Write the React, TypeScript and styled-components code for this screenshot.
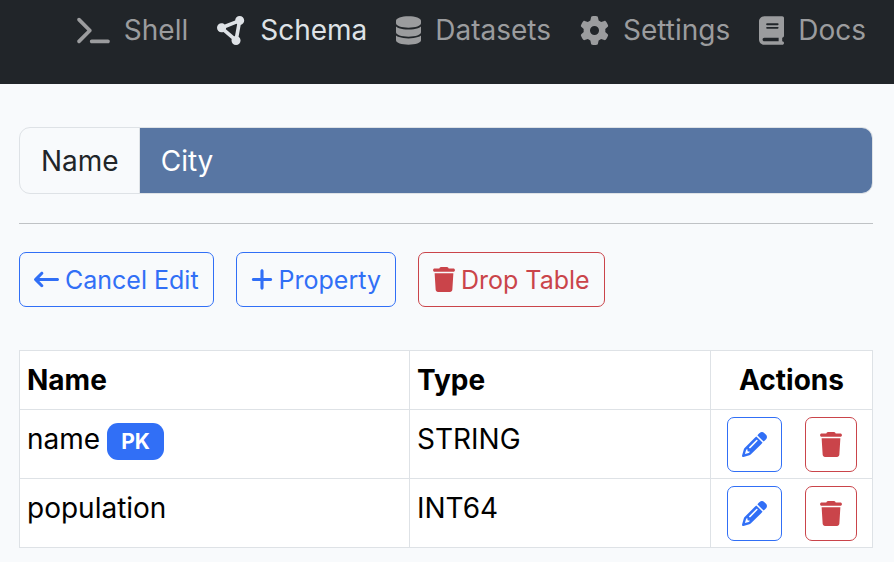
import React from "react";
import styled, { createGlobalStyle } from "styled-components";
import {
  FaArrowLeftLong,
  FaBook,
  FaCircleNodes,
  FaDatabase,
  FaGear,
  FaPencil,
  FaPlus,
  FaTerminal,
  FaTrash,
} from "react-icons/fa6";

const GlobalStyle = createGlobalStyle`
  *, *::before, *::after { box-sizing: border-box; }
  body {
    margin: 0;
    background: #f8fafc;
    color: #212529;
    font-family: Inter, "Liberation Sans", sans-serif;
    font-size: 28px;
    line-height: 42px;
  }
`;

const Icon = styled.span<{ $width: number; $height: number }>`
  flex: none;
  width: ${(p) => p.$width}px;
  height: ${(p) => p.$height}px;

  svg {
    display: block;
    width: 100%;
    height: 100%;
  }
`;

const Header = styled.header`
  display: flex;
  justify-content: flex-end;
  padding: 9px 28px 33px;
  background: #212529;
`;

const NavList = styled.nav`
  display: flex;
  gap: 29px;
`;

const NavLink = styled.a<{ $active?: boolean }>`
  display: flex;
  align-items: center;
  gap: 14px;
  color: ${(p) => (p.$active ? "#dee2e6" : "#9b9c9e")};
  text-decoration: none;
  white-space: nowrap;
`;

const Main = styled.main`
  padding: 43px 21px 14px 19px;
`;

const InputGroup = styled.div`
  display: flex;
  height: 67px;
  border: 1px solid #dee2e6;
  border-radius: 11px;
  overflow: hidden;
`;

const InputLabel = styled.label`
  display: flex;
  align-items: center;
  padding: 0 20px 0 21px;
  border-right: 1px solid #dee2e6;
`;

const NameInput = styled.input`
  flex: 1;
  min-width: 0;
  border: 0;
  padding: 0 21px;
  background: #5876a3;
  color: #fff;
  font: inherit;
  outline: none;
`;

const Divider = styled.hr`
  height: 1px;
  margin: 29px 0 28px;
  border: 0;
  background: #bfc2c5;
`;

const Toolbar = styled.div`
  display: flex;
  gap: 22px;
  margin-bottom: 43px;
`;

const tones = { primary: "#316ff6", danger: "#ca444a" };

const Button = styled.button<{ $tone: keyof typeof tones }>`
  display: inline-flex;
  align-items: center;
  gap: 6px;
  height: 55px;
  padding: 0 14px;
  border: 1px solid ${(p) => tones[p.$tone]};
  border-radius: 7px;
  background: transparent;
  color: ${(p) => tones[p.$tone]};
  font: inherit;
  font-size: 25px;
  white-space: nowrap;
  cursor: pointer;
`;

const Table = styled.table`
  width: 100%;
  table-layout: fixed;
  border-collapse: collapse;
  background: #fff;
  color: #000;
`;

const Column = styled.col<{ $width: string }>`
  width: ${(p) => p.$width};
`;

const HeadCell = styled.th<{ $center?: boolean }>`
  height: 59px;
  padding: 0 7px;
  border: 1px solid #dee2e6;
  font-weight: 700;
  text-align: ${(p) => (p.$center ? "center" : "left")};
`;

const Cell = styled.td`
  height: 69px;
  padding: 7px 7px 0;
  border: 1px solid #dee2e6;
  line-height: 44px;
  vertical-align: top;
`;

const CellText = styled.div`
  display: flex;
  align-items: flex-start;
  gap: 7px;
`;

const Badge = styled.span`
  margin-top: 6px;
  padding: 0 14px;
  border-radius: 11px;
  background: #316ff6;
  color: #fff;
  font-size: 21px;
  font-weight: 700;
  line-height: 37px;
`;

const Actions = styled.div`
  display: flex;
  justify-content: center;
  gap: 23px;
`;

const navItems = [
  { label: "Shell", icon: <FaTerminal />, width: 33 },
  { label: "Schema", icon: <FaCircleNodes />, width: 29, active: true },
  { label: "Datasets", icon: <FaDatabase />, width: 25 },
  { label: "Settings", icon: <FaGear />, width: 29 },
  { label: "Docs", icon: <FaBook />, width: 25 },
];

const properties = [
  { name: "name", type: "STRING", primaryKey: true },
  { name: "population", type: "INT64", primaryKey: false },
];

export default function App() {
  return (
    <>
      <GlobalStyle />
      <Header>
        <NavList>
          {navItems.map((item) => (
            <NavLink
              key={item.label}
              href="#"
              $active={item.active}
              aria-current={item.active ? "page" : undefined}
            >
              <Icon $width={item.width} $height={29}>{item.icon}</Icon>
              {item.label}
            </NavLink>
          ))}
        </NavList>
      </Header>
      <Main>
        <InputGroup>
          <InputLabel htmlFor="table-name">Name</InputLabel>
          <NameInput id="table-name" type="text" defaultValue="City" />
        </InputGroup>
        <Divider />
        <Toolbar>
          <Button type="button" $tone="primary">
            <Icon $width={25} $height={25}><FaArrowLeftLong /></Icon>
            Cancel Edit
          </Button>
          <Button type="button" $tone="primary">
            <Icon $width={22} $height={25}><FaPlus /></Icon>
            Property
          </Button>
          <Button type="button" $tone="danger">
            <Icon $width={22} $height={25}><FaTrash /></Icon>
            Drop Table
          </Button>
        </Toolbar>
        <Table>
          <colgroup>
            <Column $width="auto" />
            <Column $width="301px" />
            <Column $width="162px" />
          </colgroup>
          <thead>
            <tr>
              <HeadCell scope="col">Name</HeadCell>
              <HeadCell scope="col">Type</HeadCell>
              <HeadCell scope="col" $center>Actions</HeadCell>
            </tr>
          </thead>
          <tbody>
            {properties.map((property) => (
              <tr key={property.name}>
                <Cell>
                  <CellText>
                    {property.name}
                    {property.primaryKey && <Badge>PK</Badge>}
                  </CellText>
                </Cell>
                <Cell>{property.type}</Cell>
                <Cell>
                  <Actions>
                    <Button type="button" $tone="primary" aria-label={`Edit ${property.name}`}>
                      <Icon $width={25} $height={25}><FaPencil /></Icon>
                    </Button>
                    <Button type="button" $tone="danger" aria-label={`Drop ${property.name}`}>
                      <Icon $width={22} $height={25}><FaTrash /></Icon>
                    </Button>
                  </Actions>
                </Cell>
              </tr>
            ))}
          </tbody>
        </Table>
      </Main>
    </>
  );
}
